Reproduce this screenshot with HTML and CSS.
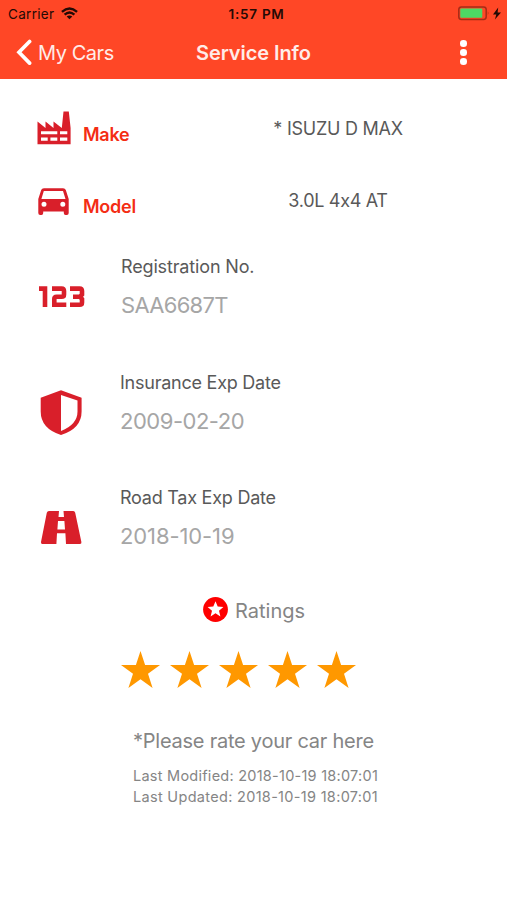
FILE: index.html
```html
<!DOCTYPE html>
<html lang="en">
<head>
    <meta charset="UTF-8">
    <meta name="viewport" content="width=device-width, initial-scale=1.0">
    <title>Service Info</title>
    <link rel="stylesheet" href="styles.css">
</head>
<body>
    <header>
        <!-- Status bar -->
        <div class="status-bar">
            <div class="carrier">
                <span>Carrier</span>
                <svg class="wifi" viewBox="0 0 18 13" fill="none" stroke="#240a05" stroke-width="2.5">
                    <path d="M1 4.7 Q9 -2.2 17 4.7"/>
                    <path d="M3.8 7.8 Q9 3.2 14.2 7.8"/>
                    <path d="M9 12.6 L6 9.8 Q9 7.4 12 9.8 Z" fill="#240a05" stroke="none"/>
                </svg>
            </div>
            <div class="time">1:57 PM</div>
            <div class="power">
                <svg width="43" height="15" viewBox="0 0 43 15">
                    <rect x=".8" y="1" width="27.4" height="12.4" rx="2.6" fill="none" stroke="#a52c17" stroke-width="1.5"/>
                    <rect x="2.3" y="2.6" width="22" height="9.2" rx="1" fill="#4cd964"/>
                    <path d="M29.8 5.2 Q31.4 7.2 29.8 9.2 Z" fill="#a52c17"/>
                    <path d="M40.2 1.6 L35 8.4 H38.3 L36.9 13.4 L43 6.4 H39.6 Z" fill="#240a05"/>
                </svg>
            </div>
        </div>

        <!-- Navigation -->
        <nav>
            <a class="back" href="#">
                <svg width="16" height="27" viewBox="0 0 16 27">
                    <path d="M13.6 2.5 L3 13.3 L13.6 24.1" fill="none" stroke="#fff" stroke-width="3.7" stroke-linecap="round"/>
                </svg>
                <span>My Cars</span>
            </a>
            <h1>Service Info</h1>
            <div class="menu-btn"><i></i><i></i><i></i></div>
        </nav>
    </header>

    <main>
        <!-- Make and model -->
        <div class="spec">
            <div class="icon">
                <svg width="34" height="34" viewBox="0 0 34 34">
                    <path fill="#d91f2a" fill-rule="evenodd" d="M.5 33.2 V10.6 L8.5 17 V10.6 L16.5 17 V10.6 L24.8 17 L26.5 .6 H31.8 L33.6 17 V33.2 Z M4 20.3 V23.3 H20.3 V20.3 Z M23 20.3 V23.3 H30.3 V20.3 Z M4 26.5 V29.7 H10.7 V26.5 Z M13.4 26.5 V29.7 H20.3 V26.5 Z M23 26.5 V29.7 H30.3 V26.5 Z"/>
                </svg>
            </div>
            <h2>Make</h2>
            <p>* ISUZU D MAX</p>
        </div>
        <div class="spec">
            <div class="icon car">
                <svg width="31" height="28" viewBox="0 0 31 28">
                    <path fill="#d91f2a" fill-rule="evenodd" d="M6 .2 H25 Q27.2 .2 27.8 2 L30.7 11 V25 Q30.7 27 28.8 27 H27.6 Q25.8 27 25.8 25 V23.6 H5.2 V25 Q5.2 27 3.4 27 H2.2 Q.3 27 .3 25 V11 L3.2 2 Q3.8 .2 6 .2 Z M5.8 3 L3.4 11 H27.5 L25 3 Z M6 13.7 A2.5 2.5 0 1 0 6 18.7 A2.5 2.5 0 1 0 6 13.7 Z M24.8 13.7 A2.5 2.5 0 1 0 24.8 18.7 A2.5 2.5 0 1 0 24.8 13.7 Z"/>
                </svg>
            </div>
            <h2>Model</h2>
            <p class="trim">3.0L 4x4 AT</p>
        </div>

        <!-- Registration, insurance, road tax -->
        <div class="detail registration">
            <svg class="detail-icon" width="47" height="22" viewBox="0 0 47 22" fill="none" stroke="#d91f2a" stroke-width="4.6">
                <path d="M1 2.6 H7 V21"/>
                <path d="M14 2.6 H23.6 Q26 2.6 26 5 V8.4 Q26 10.7 23.6 10.7 H18.6 Q16.3 10.7 16.3 13 V18.7 H28.3"/>
                <path d="M32 2.6 H41.6 Q44 2.6 44 5 V8.5 L42 10.7 H35 M42 10.7 L44 13 V16.4 Q44 18.7 41.6 18.7 H32"/>
            </svg>
            <div>
                <h3>Registration No.</h3>
                <p>SAA6687T</p>
            </div>
        </div>
        <div class="detail insurance">
            <svg class="detail-icon" width="42" height="46" viewBox="0 0 42 46">
                <path fill="#d91f2a" fill-rule="evenodd" d="M21 .3 L41.6 7.8 V21.5 Q41.6 38.5 21 45 Q.7 38.5 .7 21.5 V7.8 Z M21 4.9 V41 Q37.5 34.5 37.5 21.5 V10.6 Z"/>
            </svg>
            <div>
                <h3>Insurance Exp Date</h3>
                <p>2009-02-20</p>
            </div>
        </div>
        <div class="detail road">
            <svg class="detail-icon" width="42" height="34" viewBox="0 0 42 34">
                <path fill="#d91f2a" fill-rule="evenodd" d="M9 0 H19 L18.5 6 H24 L23.5 0 H33.2 Q34.8 0 35.2 1.7 L41.4 31 Q41.7 32.9 40 32.9 H26 L25.4 22.3 H17 L16.4 32.9 H2.4 Q.7 32.9 1 31 L6.8 1.7 Q7.3 0 9 0 Z M18 10 L17.4 18.6 H25 L24.4 10 Z"/>
            </svg>
            <div>
                <h3>Road Tax Exp Date</h3>
                <p>2018-10-19</p>
            </div>
        </div>

        <!-- Ratings -->
        <div class="ratings">
            <svg width="25" height="25" viewBox="0 0 25 25">
                <circle cx="12.5" cy="12.5" r="12.4" fill="#fe0000"/>
                <path fill="#fff" d="M12.5 4.2 L14.7 9.6 L20.4 10 L16 13.7 L17.4 19.5 L12.5 16.3 L7.6 19.5 L9 13.7 L4.6 10 L10.3 9.6 Z"/>
            </svg>
            <h4>Ratings</h4>
        </div>
        <div class="stars">
            <svg viewBox="0 0 39 37"><path d="M19.5 0 L24.1 14.1 H39 L27 22.8 L31.6 37 L19.5 28.3 L7.4 37 L12 22.8 L0 14.1 H14.9 Z"/></svg>
            <svg viewBox="0 0 39 37"><path d="M19.5 0 L24.1 14.1 H39 L27 22.8 L31.6 37 L19.5 28.3 L7.4 37 L12 22.8 L0 14.1 H14.9 Z"/></svg>
            <svg viewBox="0 0 39 37"><path d="M19.5 0 L24.1 14.1 H39 L27 22.8 L31.6 37 L19.5 28.3 L7.4 37 L12 22.8 L0 14.1 H14.9 Z"/></svg>
            <svg viewBox="0 0 39 37"><path d="M19.5 0 L24.1 14.1 H39 L27 22.8 L31.6 37 L19.5 28.3 L7.4 37 L12 22.8 L0 14.1 H14.9 Z"/></svg>
            <svg viewBox="0 0 39 37"><path d="M19.5 0 L24.1 14.1 H39 L27 22.8 L31.6 37 L19.5 28.3 L7.4 37 L12 22.8 L0 14.1 H14.9 Z"/></svg>
        </div>

        <div class="notes">
            <p class="hint">*Please rate your car here</p>
            <p class="stamp">Last Modified: 2018-10-19 18:07:01</p>
            <p class="stamp updated">Last Updated: 2018-10-19 18:07:01</p>
        </div>
    </main>
</body>
</html>
```
FILE: styles.css
```css
:root {
    --primary: #ff4726;
    --label: #f42d14;
    --text: #595959;
    --muted: #a6a6a6;
    --grey: #858585;
    --star: #ff9800;
}

* {
    margin: 0;
    padding: 0;
    box-sizing: border-box;
}

body {
    background: #fff;
    color: var(--text);
    font-family: Inter, 'Liberation Sans', sans-serif;
    white-space: nowrap;
}

svg {
    display: block;
    flex-shrink: 0;
}

/* Header */
header {
    height: 79px;
    background: var(--primary);
}

.status-bar {
    display: grid;
    grid-template-columns: 1fr auto 1fr;
    align-items: center;
    height: 27px;
    padding: 0 6px 0 8px;
    color: #240a05;
    font-size: 13.5px;
}

.carrier {
    display: flex;
    align-items: center;
    gap: 7px;
    letter-spacing: 0.3px;
}

.wifi {
    width: 17px;
    height: 13px;
}

.time {
    padding-left: 4px;
    font-weight: 600;
    letter-spacing: 0.75px;
}

.power {
    justify-self: end;
}

nav {
    display: grid;
    grid-template-columns: 180px auto 1fr;
    align-items: center;
    height: 51px;
    padding: 0 40px 0 16px;
    color: #fff;
}

.back {
    display: flex;
    align-items: center;
    gap: 6px;
    color: #ffece8;
    font-size: 20px;
    letter-spacing: -0.45px;
    text-decoration: none;
}

nav h1 {
    color: #ffece8;
    font-size: 20px;
    font-weight: 600;
    letter-spacing: -0.08px;
}

.menu-btn {
    justify-self: end;
    display: grid;
    gap: 2.6px;
}

.menu-btn i {
    width: 6.6px;
    height: 6.6px;
    border-radius: 50%;
    background: #fff;
}

main {
    padding-top: 32px;
}

/* Make / model rows */
.spec {
    display: grid;
    grid-template-columns: 46px 190px 130px;
    height: 72px;
    padding-left: 37px;
}

.icon.car {
    padding: 5px 0 0 1px;
}

.spec h2 {
    padding-top: 12px;
    color: var(--label);
    font-size: 18px;
    font-weight: 600;
    letter-spacing: -0.25px;
    line-height: 24px;
}

.spec p {
    padding-top: 6px;
    font-size: 18px;
    letter-spacing: -0.25px;
    line-height: 24px;
    text-align: center;
}

.spec .trim {
    letter-spacing: -0.3px;
    font-feature-settings: 'calt' 0;
}

/* Icon with a label above its value */
.detail {
    display: grid;
    grid-template-columns: 83px auto;
    height: 115px;
    padding-left: 37px;
}

.detail.registration {
    grid-template-columns: 84px auto;
    height: 116px;
}

.detail-icon {
    margin: 19px 0 0 3px;
}

.registration .detail-icon {
    margin: 31px 0 0 1px;
}

.road .detail-icon {
    margin-top: 25px;
}

.detail h3 {
    font-size: 18px;
    font-weight: 400;
    letter-spacing: -0.24px;
    line-height: 24px;
}

.detail.registration h3 {
    letter-spacing: -0.15px;
}

.detail p {
    margin-top: 13px;
    color: var(--muted);
    font-size: 22px;
    letter-spacing: -0.48px;
    line-height: 26px;
}

.detail.registration p {
    letter-spacing: -0.7px;
}

.detail.road p {
    letter-spacing: -0.1px;
}

/* Ratings */
.ratings {
    display: flex;
    align-items: center;
    gap: 7px;
    height: 25px;
    margin: -4px 0 0 203px;
}

.ratings h4 {
    padding-top: 3px;
    color: var(--grey);
    font-size: 20px;
    font-weight: 400;
    line-height: 25px;
}

.stars {
    display: flex;
    gap: 10px;
    margin: 29px 0 0 121px;
}

.stars svg {
    width: 39px;
    height: 37px;
    fill: var(--star);
}

/* Notes */
.notes {
    margin: 40px 0 0 133px;
    color: var(--grey);
}

.hint {
    margin-bottom: 11px;
    font-size: 20px;
    letter-spacing: -0.24px;
    line-height: 26px;
}

.stamp {
    font-size: 14.5px;
    letter-spacing: 0.25px;
    line-height: 21px;
}

.stamp.updated {
    letter-spacing: 0.31px;
}
```
